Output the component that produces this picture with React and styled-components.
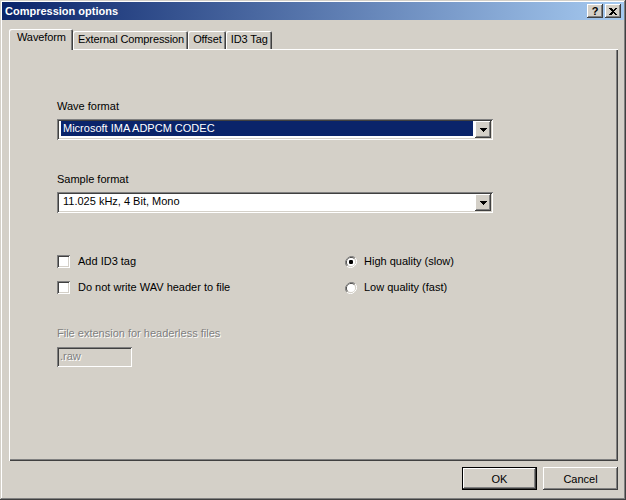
import React from "react";
import styled, { createGlobalStyle } from "styled-components";

const face = "#d4d0c8";
const shadow = "#808080";
const darkShadow = "#404040";

const raised = `inset -1px -1px ${darkShadow}, inset 1px 1px #fff, inset -2px -2px ${shadow}, inset 2px 2px ${face}`;
const sunken = `inset 1px 1px ${shadow}, inset -1px -1px #fff, inset 2px 2px ${darkShadow}, inset -2px -2px ${face}`;

const GlobalStyle = createGlobalStyle`
  body {
    margin: 0;
    background: ${face};
    font-family: "Liberation Sans", Arial, sans-serif;
    font-size: 11px;
    color: #000;
  }
`;

const Window = styled.div`
  width: 626px;
  height: 500px;
  box-sizing: border-box;
  padding: 2px;
  background: ${face};
  box-shadow: inset -1px -1px ${darkShadow}, inset 1px 1px ${face},
    inset -2px -2px ${shadow}, inset 2px 2px #fff;
  display: flex;
  flex-direction: column;
`;

const TitleBar = styled.div`
  height: 18px;
  flex: none;
  display: flex;
  align-items: center;
  justify-content: space-between;
  padding: 0 3px 0 3px;
  background: linear-gradient(to right, #0a246a, #a6caf0);
  color: #fff;
  font-weight: bold;
  font-size: 11px;
`;

const TitleButtons = styled.div`
  display: flex;
  gap: 2px;
`;

const TitleButton = styled.div`
  width: 16px;
  height: 14px;
  box-sizing: border-box;
  background: ${face};
  box-shadow: ${raised};
  color: #000;
  display: flex;
  align-items: center;
  justify-content: center;
  font-weight: bold;
  font-size: 11px;
  line-height: 1;
  padding-top: ${props => (props.glyph ? "1px" : "0")};
`;

const Body = styled.div`
  flex: 1;
  display: flex;
  flex-direction: column;
  padding: 9px 6px 0 7px;
`;

const TabStrip = styled.div`
  height: 20px;
  display: flex;
  align-items: flex-end;
  position: relative;
  z-index: 1;
`;

const Tab = styled.div`
  height: ${props => (props.active ? "21px" : "18px")};
  margin-bottom: ${props => (props.active ? "-1px" : "0")};
  box-sizing: border-box;
  padding: ${props => (props.active ? "2px 7px 0 8px" : "2px 4px 0 5px")};
  background: ${face};
  border-radius: 2px 2px 0 0;
  box-shadow: inset 1px 1px #fff, inset -1px 0 ${darkShadow},
    inset -2px 0 ${shadow};
  white-space: nowrap;
  line-height: 13px;
  letter-spacing: -0.1px;
`;

const Panel = styled.div`
  flex: 1;
  background: ${face};
  box-shadow: inset 1px 1px #fff, inset -1px -1px ${darkShadow},
    inset -2px -2px ${shadow};
  padding: 51px 0 0 48px;
  box-sizing: border-box;
  display: flex;
  flex-direction: column;
`;

const Label = styled.div`
  line-height: 13px;
  color: ${props => (props.disabled ? shadow : "#000")};
  text-shadow: ${props => (props.disabled ? "1px 1px #fff" : "none")};
  margin-top: ${props => props.gap || 0}px;
`;

const Combo = styled.div`
  width: 436px;
  height: 21px;
  box-sizing: border-box;
  margin-top: 6px;
  padding: 2px;
  background: #fff;
  box-shadow: ${sunken};
  display: flex;
`;

const ComboValue = styled.div`
  flex: 1;
  margin: 0 2px 2px 2px;
  padding: 1px 2px 0;
  line-height: 13px;
  background: ${props => (props.selected ? "#0a246a" : "transparent")};
  color: ${props => (props.selected ? "#fff" : "#000")};
`;

const DropButton = styled.div`
  width: 16px;
  height: 17px;
  flex: none;
  background: ${face};
  box-shadow: ${raised};
  display: flex;
  align-items: center;
  justify-content: center;
`;

const Options = styled.div`
  margin-top: 42px;
  display: grid;
  grid-template-columns: 287px 1fr;
  row-gap: 13px;
`;

const Option = styled.label`
  display: flex;
  align-items: center;
  height: 13px;
  gap: ${props => (props.radio ? "7px" : "8px")};
  line-height: 13px;
  margin-left: ${props => (props.radio ? "1px" : "0")};
`;

const CheckBox = styled.span`
  width: 13px;
  height: 13px;
  box-sizing: border-box;
  flex: none;
  background: #fff;
  box-shadow: ${sunken};
`;

const TextBox = styled.div`
  width: 75px;
  height: 20px;
  box-sizing: border-box;
  margin-top: 7px;
  padding: 3px 3px 0;
  background: ${face};
  box-shadow: ${sunken};
  color: ${shadow};
  text-shadow: 1px 1px #fff;
  line-height: 13px;
`;

const Footer = styled.div`
  flex: none;
  display: flex;
  justify-content: flex-end;
  gap: 6px;
  padding: 6px 0 8px;
`;

const Button = styled.div`
  width: 75px;
  height: 23px;
  box-sizing: border-box;
  display: flex;
  align-items: center;
  justify-content: center;
  background: ${face};
  box-shadow: ${props =>
    props.primary
      ? `inset 0 0 0 1px #000, inset -2px -2px ${darkShadow}, inset 2px 2px #fff, inset -3px -3px ${shadow}`
      : raised};
`;

const Arrow = () => (
  <svg width="7" height="4" viewBox="0 0 7 4">
    <path d="M0 0h7v1H6v1H5v1H4v1H3V3H2V2H1V1H0z" fill="#000" />
  </svg>
);

const CloseGlyph = () => (
  <svg width="8" height="7" viewBox="0 0 8 7">
    <path
      d="M0 0h2l2 2 2-2h2L5 3.5 8 7H6L4 5 2 7H0l3-3.5z"
      fill="#000"
      shapeRendering="crispEdges"
    />
  </svg>
);

const Radio = ({ checked }) => (
  <svg width="12" height="12" viewBox="0 0 12 12" style={{ flex: "none" }}>
    <path d="M10.2 1.8A6 6 0 0 0 1.8 10.2" stroke={shadow} strokeWidth="1" fill="none" />
    <path d="M1.8 10.2A6 6 0 0 0 10.2 1.8" stroke="#fff" strokeWidth="1" fill="none" />
    <path d="M9.5 2.5A5 5 0 0 0 2.5 9.5" stroke={darkShadow} strokeWidth="1" fill="none" />
    <path d="M2.5 9.5A5 5 0 0 0 9.5 2.5" stroke={face} strokeWidth="1" fill="none" />
    <circle cx="6" cy="6" r="4" fill="#fff" />
    {checked && <rect x="4" y="4" width="4" height="4" rx="1.2" fill="#000" />}
  </svg>
);

const tabs = ["Waveform", "External Compression", "Offset", "ID3 Tag"];

export default function App() {
  return (
    <>
      <GlobalStyle />
      <Window>
        <TitleBar>
          <span>Compression options</span>
          <TitleButtons>
            <TitleButton glyph>?</TitleButton>
            <TitleButton>
              <CloseGlyph />
            </TitleButton>
          </TitleButtons>
        </TitleBar>
        <Body>
          <TabStrip>
            {tabs.map((t, i) => (
              <Tab key={t} active={i === 0}>
                {t}
              </Tab>
            ))}
          </TabStrip>
          <Panel>
            <Label>Wave format</Label>
            <Combo>
              <ComboValue selected>Microsoft IMA ADPCM CODEC</ComboValue>
              <DropButton>
                <Arrow />
              </DropButton>
            </Combo>
            <Label gap={33}>Sample format</Label>
            <Combo>
              <ComboValue>11.025 kHz, 4 Bit, Mono</ComboValue>
              <DropButton>
                <Arrow />
              </DropButton>
            </Combo>
            <Options>
              <Option>
                <CheckBox />
                Add ID3 tag
              </Option>
              <Option radio>
                <Radio checked />
                High quality (slow)
              </Option>
              <Option>
                <CheckBox />
                Do not write WAV header to file
              </Option>
              <Option radio>
                <Radio />
                Low quality (fast)
              </Option>
            </Options>
            <Label disabled gap={33}>
              File extension for headerless files
            </Label>
            <TextBox>.raw</TextBox>
          </Panel>
          <Footer>
            <Button primary>OK</Button>
            <Button>Cancel</Button>
          </Footer>
        </Body>
      </Window>
    </>
  );
}
